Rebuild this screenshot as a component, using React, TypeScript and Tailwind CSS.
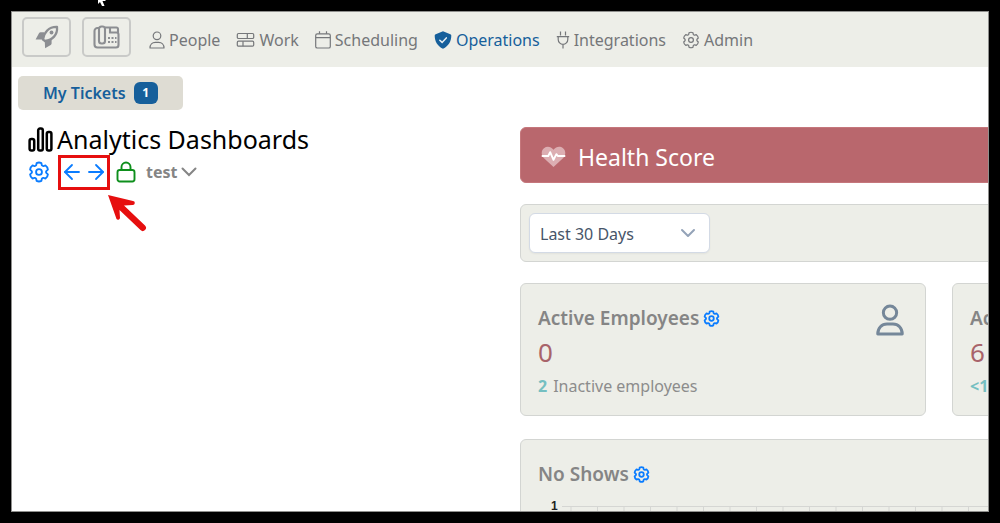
import type { ReactNode } from "react";
import { ArrowLeft, ArrowRight, ChevronDown } from "lucide-react";

type IconProps = { className?: string; strokeWidth?: number };

function RocketIcon() {
  return (
    <svg viewBox="0 0 24 24" className="size-6" fill="none" aria-hidden="true">
      <path
        d="M8 14.6C9 7.6 13.500 1.600 22 1.900c.8 8-4.600 13.200-12 14.100z"
        stroke="currentColor"
        strokeWidth="2.300"
        strokeLinejoin="round"
      />
      <path
        d="M9.300 7.200H5.600c-.7 0-1.200.3-1.500.9L.6 14.400h7.700c.1-2.500.5-4.800 1-7.200zM16.600 14.800v3.700c0 .6-.3 1.100-.9 1.400l-5.600 3.400-.3-6.600-2.300-2.200c3.400.6 6.500.6 9.100.3z"
        fill="currentColor"
      />
      <circle cx="16.500" cy="7.500" r="1.900" fill="currentColor" />
    </svg>
  );
}

function FaxIcon() {
  return (
    <svg viewBox="0 0 27 24" className="h-6 w-[27px]" fill="none" stroke="currentColor" strokeWidth="2.100" aria-hidden="true">
      <path d="M6 3H4.500A3 3 0 0 0 1.500 6v13.500a3 3 0 0 0 3 3H23a2.500 2.500 0 0 0 2.500-2.500V9.500a2 2 0 0 0-2-2H17V3" />
      <rect x="6" y="1.500" width="6" height="17" rx="2.500" />
      <path d="M12 2.500h11.500a1.500 1.500 0 0 1 1.500 1.500v4" />
      <g fill="currentColor" stroke="none">
        <rect x="15" y="12" width="2" height="2" />
        <rect x="18.500" y="12" width="2" height="2" />
        <rect x="22" y="12" width="1.500" height="2" />
        <rect x="15" y="16" width="2" height="2" />
        <rect x="18.500" y="16" width="2" height="2" />
        <rect x="22" y="16" width="1.500" height="2" />
      </g>
    </svg>
  );
}

function GearIcon({ className, strokeWidth = 2 }: IconProps) {
  return (
    <svg viewBox="0 0 24 24" className={className} fill="none" stroke="currentColor" strokeWidth={strokeWidth} strokeLinejoin="round" aria-hidden="true">
      <path d="M9.400 2.300A6 6 0 0 1 14.600 2.300L15.100 4.700Q15.800 5.700 17 5.500L19.100 4.900A6 6 0 0 1 21.700 9.400L20 11Q19.400 12 20 13L21.700 14.600A6 6 0 0 1 19.100 19.100L17 18.500Q15.800 18.300 15.100 19.300L14.600 21.700A6 6 0 0 1 9.400 21.700L8.900 19.300Q8.200 18.300 7 18.500L4.900 19.100A6 6 0 0 1 2.300 14.600L4 13Q4.600 12 4 11L2.300 9.400A6 6 0 0 1 4.900 4.900L7 5.500Q8.200 5.700 8.900 4.700z" />
      <circle cx="12" cy="12" r="3.200" />
    </svg>
  );
}

function PersonIcon({ className, strokeWidth = 1.2 }: IconProps) {
  return (
    <svg viewBox="0 0 16 18" className={className} fill="none" stroke="currentColor" strokeWidth={strokeWidth} aria-hidden="true">
      <circle cx="8" cy="4.800" r="3.800" />
      <path d="M1 17c0-3.500 2.300-5.700 5.300-5.700h3.400c3 0 5.300 2.200 5.300 5.700z" strokeLinejoin="round" />
    </svg>
  );
}

function BlocksIcon() {
  return (
    <svg viewBox="0 0 18 16" className="h-4 w-[19px]" fill="none" stroke="currentColor" strokeWidth="1.200" aria-hidden="true">
      <rect x=".8" y="1.500" width="16.400" height="5" rx="1.200" />
      <rect x=".8" y="9.200" width="16.400" height="5" rx="1.200" />
      <path d="M10.800 1.500v5M6.500 9.200v5" />
    </svg>
  );
}

function CalendarIcon() {
  return (
    <svg viewBox="0 0 16 18" className="h-[18px] w-4" fill="none" stroke="currentColor" strokeWidth="1.200" aria-hidden="true">
      <rect x=".7" y="2.800" width="14.600" height="14.200" rx="1.600" />
      <path d="M.7 6.600h14.600M4.500 .3v2.500M11.500 .3v2.500" />
    </svg>
  );
}

function ShieldIcon() {
  return (
    <svg viewBox="0 0 18 18" className="size-[18px]" fill="none" aria-hidden="true">
      <path d="M9 .3 16.300 3.200c.6.2 1 .7 1 1.300C17.300 10 14.800 15.200 9 17.700 3.200 15.200.7 10 .7 4.500c0-.6.4-1.100 1-1.300z" fill="currentColor" />
      <path d="m5.800 9.200 2.300 2.200 4.200-4.500" stroke="#e8eef2" strokeWidth="1.500" strokeLinecap="round" />
    </svg>
  );
}

function PlugIcon() {
  return (
    <svg viewBox="0 0 13 18" className="h-[18px] w-3.5" fill="none" stroke="currentColor" strokeWidth="1.200" aria-hidden="true">
      <path d="M4 .5v4M9 .5v4M.3 5.700h12.400M1.700 5.700v2.800a4.800 4.800 0 0 0 9.600 0V5.700M6.500 13.300v4.200" />
    </svg>
  );
}

function ChartIcon() {
  return (
    <svg viewBox="0 0 25 25" className="size-[25px]" fill="none" stroke="currentColor" strokeWidth="2.500" aria-hidden="true">
      <rect x="1.600" y="12" width="4.600" height="11.500" rx="1.800" />
      <rect x="10.200" y="1.500" width="4.600" height="22" rx="1.800" />
      <rect x="18.800" y="5" width="4.600" height="18.500" rx="1.800" />
    </svg>
  );
}

function LockIcon() {
  return (
    <svg viewBox="0 0 20 22" className="h-[22px] w-5" fill="none" stroke="currentColor" strokeWidth="1.900" aria-hidden="true">
      <rect x="1.500" y="9" width="17" height="11.500" rx="2.200" />
      <path d="M5.500 9V6a4.500 4.500 0 0 1 9 0v3" />
    </svg>
  );
}

function HeartPulseIcon() {
  return (
    <svg viewBox="0 0 26 23" className="h-[22px] w-[25px]" fill="none" aria-hidden="true">
      <path
        d="M13 22 2.800 12.500C-.3 9.300.2 4.500 3 2.300 6.200-.2 10.200.5 13 3.800c2.800-3.300 6.800-4 10-1.500 2.800 2.200 3.300 7 .2 10.200z"
        fill="#dcaeb2"
      />
      <path d="M1.500 10.500h6l2-4 3.500 8 3-6 1.500 2h7" stroke="#fff" strokeWidth="2" strokeLinecap="round" strokeLinejoin="round" />
    </svg>
  );
}

const navItems: { label: string; icon: ReactNode; active?: boolean }[] = [
  { label: "People", icon: <PersonIcon className="h-[18px] w-4" /> },
  { label: "Work", icon: <BlocksIcon /> },
  { label: "Scheduling", icon: <CalendarIcon /> },
  { label: "Operations", icon: <ShieldIcon />, active: true },
  { label: "Integrations", icon: <PlugIcon /> },
  { label: "Admin", icon: <GearIcon className="size-[18px]" strokeWidth={1.6} /> },
];

function Header() {
  return (
    <header className="flex h-[55px] items-center bg-[#edeee8] pl-2.5 text-[#75777a]">
      <div className="flex gap-[11px] pb-1.5 text-[#8c8e92]">
        <button type="button" aria-label="Launch" className="flex h-10 w-[49px] items-center justify-center rounded-[5px] border-2 border-[#c9cac8]">
          <RocketIcon />
        </button>
        <button type="button" aria-label="Fax" className="flex h-10 w-[49px] items-center justify-center rounded-[5px] border-2 border-[#c9cac8]">
          <FaxIcon />
        </button>
      </div>
      <nav className="ml-[18px] flex gap-4">
        {navItems.map((item) => (
          <a
            key={item.label}
            href="#"
            className={
              item.active
                ? "flex items-center gap-1 whitespace-nowrap text-[#165f9b]"
                : "flex items-center gap-1 whitespace-nowrap"
            }
          >
            {item.icon}
            {item.label}
          </a>
        ))}
      </nav>
    </header>
  );
}

function Toolbar() {
  return (
    <div className="mt-[3px] flex h-9 items-center text-[#0a7cff]">
      <button type="button" aria-label="Settings">
        <GearIcon className="size-[22px]" />
      </button>
      <div className="relative ml-2 flex h-[35px] w-[52px] items-center justify-center border-[3px] border-[#e60f0f]">
        <button type="button" aria-label="Previous dashboard">
          <ArrowLeft className="size-6" strokeWidth={1.8} />
        </button>
        <button type="button" aria-label="Next dashboard">
          <ArrowRight className="size-6" strokeWidth={1.8} />
        </button>
        <svg viewBox="0 0 40 38" className="absolute top-9 left-[46px] h-[38px] w-10" fill="#e60f0f" aria-hidden="true">
          <path d="M1 1 26 7a2 2 0 0 1-.5 4L17 11.500 38 31.500a3 3 0 0 1-4.500 4.500L12.500 16 13 24a2 2 0 0 1-3.500 1z" />
        </svg>
      </div>
      <button type="button" aria-label="Lock layout" className="ml-1.5 text-[#0e8f1c]">
        <LockIcon />
      </button>
      <button type="button" className="ml-2.5 flex items-center gap-1 font-bold text-[#858585]">
        test
        <svg viewBox="0 0 16 10" className="h-2.5 w-4" fill="none" stroke="currentColor" strokeWidth="2" strokeLinecap="round" aria-hidden="true">
          <path d="m1.500 1.500 6.500 6.500 6.500-6.500" />
        </svg>
      </button>
    </div>
  );
}

function SettingsButton() {
  return (
    <button type="button" aria-label="Widget settings" className="text-[#0a7cff]">
      <GearIcon className="size-[17px]" strokeWidth={2.5} />
    </button>
  );
}

const cardClass = "rounded-md border border-[#d3d5d2] bg-[#edeee8]";

function StatCard({ title, value, count, note, icon }: { title: string; value: string; count: string; note: string; icon: ReactNode }) {
  return (
    <section className={`${cardClass} flex h-[133px] w-[406px] shrink-0 justify-between px-[17px] pt-5`}>
      <div>
        <h2 className="flex items-center gap-1 text-[19px] leading-7 font-semibold whitespace-nowrap text-[#858585]">
          {title}
          <SettingsButton />
        </h2>
        <p className="mt-0.5 text-[26px] leading-9 text-[#a8636a]">{value}</p>
        <p className="mt-0.5 text-base leading-7 text-[#8c8c8c]">
          <strong className="mr-1.5 text-[#75bfc1]">{count}</strong>
          {note}
        </p>
      </div>
      <div className="mr-1 text-[#758799]">{icon}</div>
    </section>
  );
}

const columns = Array.from({ length: 20 }, (_, i) => 9 + i * 26.5);

function NoShows() {
  return (
    <section className={`${cardClass} mt-0.5 h-[300px] px-[17px] pt-5`}>
      <h2 className="flex items-center gap-1 text-[19px] leading-7 font-semibold text-[#858585]">
        No Shows
        <SettingsButton />
      </h2>
      <div className="mt-3 flex gap-1 pl-[13px]">
        <span className="font-['Liberation_Sans',sans-serif] text-xs leading-3 font-bold text-[#222]">1</span>
        <svg className="mt-1.5 h-[200px] w-[520px]" stroke="#d5d6d3" aria-hidden="true">
          <path d="M0 .5H520" />
          {columns.map((x) => (
            <path key={x} d={`M${x} 0V200`} />
          ))}
        </svg>
      </div>
    </section>
  );
}

export default function App() {
  return (
    <div className="relative h-screen overflow-hidden bg-black p-[11px] font-['Noto_Sans','Open_Sans',sans-serif] text-base">
      <svg viewBox="0 0 10 8" className="absolute top-0 left-[98px] h-2 w-2.5" fill="#fff" aria-hidden="true">
        <path d="M0 0v4l2-2 2 4h2.500L4.500 1H8L7 0z" />
      </svg>
      <div className="h-full overflow-hidden border border-[#8f8f8d] bg-white">
        <Header />
        <main>
          <button type="button" className="mt-[9px] ml-1.5 flex h-[34px] items-center gap-2 rounded-[5px] bg-[#dedcd3] px-[25px] font-semibold text-[#165f9b]">
            My Tickets
            <span className="flex h-[22px] w-6 items-center justify-center rounded-md bg-[#165f9b] text-xs font-bold text-white">1</span>
          </button>
          <div className="mt-[17px] grid grid-cols-[508px_1fr]">
            <div className="pl-4">
              <h1 className="flex h-6 items-center gap-1 text-[25px] leading-6 text-black">
                <ChartIcon />
                Analytics Dashboards
              </h1>
              <Toolbar />
            </div>
            <div className="flex min-w-[560px] flex-col gap-[21px]">
              <section className="flex h-14 items-center gap-3 rounded-md border border-[#c5777c] bg-[#b9676d] px-5 pt-1 text-[23px] text-white">
                <HeartPulseIcon />
                <h2>Health Score</h2>
              </section>
              <section className={`${cardClass} h-[58px] p-2`}>
                <div className="relative w-[181px]">
                  <select aria-label="Period" className="h-10 w-full appearance-none rounded-md border border-[#d3dae5] bg-white px-2.5 pt-0.5 text-[#475569] shadow-xs">
                    <option>Last 30 Days</option>
                  </select>
                  <ChevronDown className="pointer-events-none absolute top-2 right-2.5 size-6 text-[#94a3b8]" strokeWidth={2} />
                </div>
              </section>
              <div className="flex gap-[26px]">
                <StatCard
                  title="Active Employees"
                  value="0"
                  count="2"
                  note="Inactive employees"
                  icon={<PersonIcon className="h-8 w-7" strokeWidth={1.7} />}
                />
                <StatCard title="Active Jobs" value="6" count="<1" note="Per employee" icon={null} />
              </div>
              <NoShows />
            </div>
          </div>
        </main>
      </div>
    </div>
  );
}
